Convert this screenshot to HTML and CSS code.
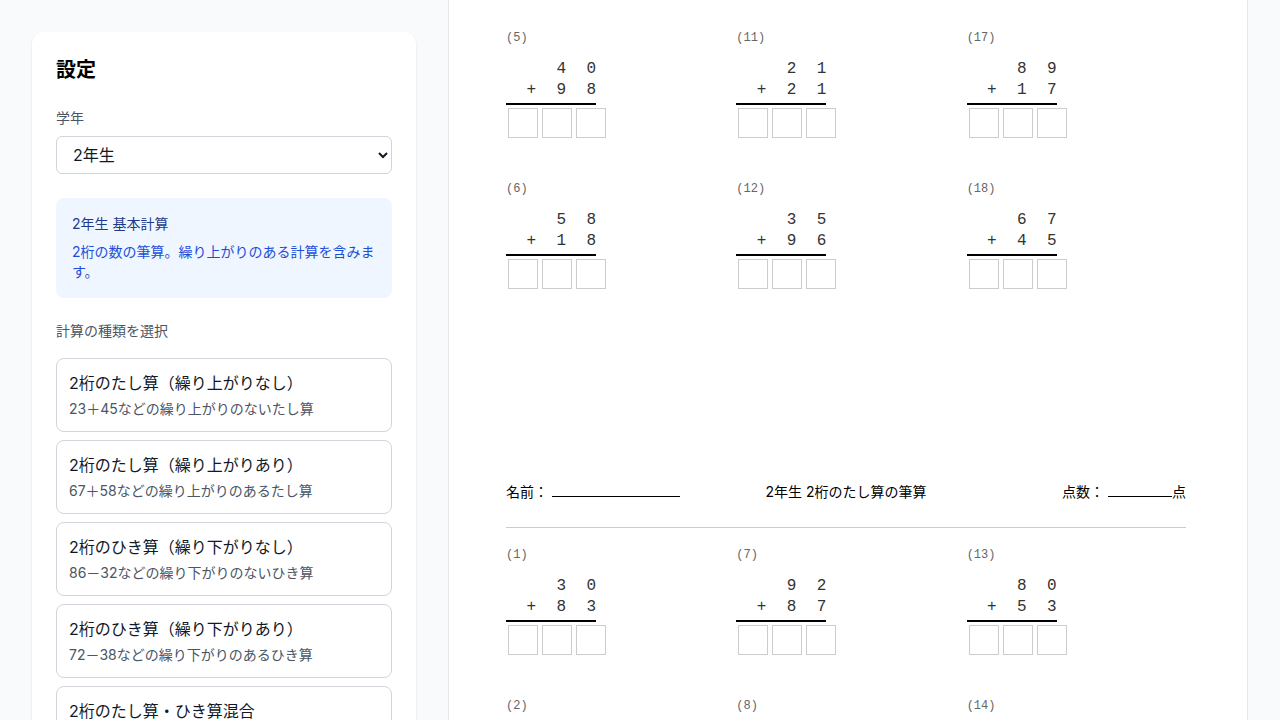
FILE: index.html
```html
<!DOCTYPE html>
<html lang="ja">
<head>
<meta charset="utf-8">
<title>筆算プリント</title>
<link rel="stylesheet" href="styles.css">
</head>
<body>
<div class="layout">
  <aside class="panel">
    <h2 class="panel-title">設定</h2>
    <label class="field-label">学年</label>
    <select class="grade-select">
      <option>1年生</option>
      <option selected>2年生</option>
      <option>3年生</option>
    </select>
    <div class="info">
      <div class="info-title">2年生 基本計算</div>
      <div class="info-desc">2桁の数の筆算。繰り上がりのある計算を含みます。</div>
    </div>
    <div class="field-label gap-16">計算の種類を選択</div>
    <div class="options">
      <div class="option">
        <div class="option-title">2桁のたし算（繰り上がりなし）</div>
        <div class="option-sub">23＋45などの繰り上がりのないたし算</div>
      </div>
      <div class="option">
        <div class="option-title">2桁のたし算（繰り上がりあり）</div>
        <div class="option-sub">67＋58などの繰り上がりのあるたし算</div>
      </div>
      <div class="option">
        <div class="option-title">2桁のひき算（繰り下がりなし）</div>
        <div class="option-sub">86－32などの繰り下がりのないひき算</div>
      </div>
      <div class="option">
        <div class="option-title">2桁のひき算（繰り下がりあり）</div>
        <div class="option-sub">72－38などの繰り下がりのあるひき算</div>
      </div>
      <div class="option">
        <div class="option-title">2桁のたし算・ひき算混合</div>
        <div class="option-sub">たし算とひき算が混ざった問題</div>
      </div>
    </div>
  </aside>

  <main class="sheet">
    <section class="grid">
      <div class="prob"><div class="num">(5)</div><div class="row"><span></span><span>4</span><span>0</span></div><div class="row last"><span>+</span><span>9</span><span>8</span></div><div class="boxes"><i></i><i></i><i></i></div></div>
      <div class="prob"><div class="num">(11)</div><div class="row"><span></span><span>2</span><span>1</span></div><div class="row last"><span>+</span><span>2</span><span>1</span></div><div class="boxes"><i></i><i></i><i></i></div></div>
      <div class="prob"><div class="num">(17)</div><div class="row"><span></span><span>8</span><span>9</span></div><div class="row last"><span>+</span><span>1</span><span>7</span></div><div class="boxes"><i></i><i></i><i></i></div></div>
      <div class="prob"><div class="num">(6)</div><div class="row"><span></span><span>5</span><span>8</span></div><div class="row last"><span>+</span><span>1</span><span>8</span></div><div class="boxes"><i></i><i></i><i></i></div></div>
      <div class="prob"><div class="num">(12)</div><div class="row"><span></span><span>3</span><span>5</span></div><div class="row last"><span>+</span><span>9</span><span>6</span></div><div class="boxes"><i></i><i></i><i></i></div></div>
      <div class="prob"><div class="num">(18)</div><div class="row"><span></span><span>6</span><span>7</span></div><div class="row last"><span>+</span><span>4</span><span>5</span></div><div class="boxes"><i></i><i></i><i></i></div></div>
    </section>

    <header class="sheet-head">
      <div class="head-left">名前：<span class="blank name"></span></div>
      <div class="head-center">2年生 2桁のたし算の筆算</div>
      <div class="head-right">点数：<span class="blank score"></span>点</div>
    </header>
    <div class="divider"></div>

    <section class="grid">
      <div class="prob"><div class="num">(1)</div><div class="row"><span></span><span>3</span><span>0</span></div><div class="row last"><span>+</span><span>8</span><span>3</span></div><div class="boxes"><i></i><i></i><i></i></div></div>
      <div class="prob"><div class="num">(7)</div><div class="row"><span></span><span>9</span><span>2</span></div><div class="row last"><span>+</span><span>8</span><span>7</span></div><div class="boxes"><i></i><i></i><i></i></div></div>
      <div class="prob"><div class="num">(13)</div><div class="row"><span></span><span>8</span><span>0</span></div><div class="row last"><span>+</span><span>5</span><span>3</span></div><div class="boxes"><i></i><i></i><i></i></div></div>
      <div class="prob"><div class="num">(2)</div><div class="row"><span></span><span>4</span><span>6</span></div><div class="row last"><span>+</span><span>7</span><span>9</span></div><div class="boxes"><i></i><i></i><i></i></div></div>
      <div class="prob"><div class="num">(8)</div><div class="row"><span></span><span>5</span><span>4</span></div><div class="row last"><span>+</span><span>6</span><span>8</span></div><div class="boxes"><i></i><i></i><i></i></div></div>
      <div class="prob"><div class="num">(14)</div><div class="row"><span></span><span>7</span><span>3</span></div><div class="row last"><span>+</span><span>2</span><span>9</span></div><div class="boxes"><i></i><i></i><i></i></div></div>
    </section>
  </main>
</div>
</body>
</html>
```

FILE: styles.css
```css
* { box-sizing: border-box; }
html, body { margin: 0; padding: 0; }
body {
  background: #f9fafb;
  font-family: Inter, "Noto Sans CJK JP", sans-serif;
  color: #111827;
  height: 720px;
  overflow: hidden;
}
.layout {
  display: flex;
  gap: 32px;
  padding: 0 32px;
  align-items: flex-start;
}
.panel {
  width: 384px;
  flex: none;
  margin-top: 32px;
  background: #fff;
  border-radius: 12px;
  box-shadow: 0 1px 3px rgba(0,0,0,0.08), 0 1px 2px rgba(0,0,0,0.04);
  padding: 24px;
}
.panel-title {
  margin: 0 0 24px;
  font-size: 20px;
  line-height: 28px;
  font-weight: 700;
  color: #000;
}
.field-label {
  display: block;
  font-size: 14px;
  line-height: 20px;
  color: #4b5563;
  margin-bottom: 8px;
}
.field-label.gap-16 { margin-bottom: 17px; }
.grade-select {
  display: block;
  width: 100%;
  height: 38px;
  padding: 0 12px;
  font-family: Inter, "Noto Sans CJK JP", sans-serif;
  font-size: 16px;
  color: #111827;
  background: #fff;
  border: 1px solid #d1d5db;
  border-radius: 6px;
  margin-bottom: 24px;
}
.info {
  background: #eff6ff;
  border-radius: 8px;
  padding: 16px 16px 17px;
  margin-bottom: 23px;
}
.info-title {
  font-size: 14px;
  line-height: 20px;
  font-weight: 400;
  color: #1e3a8a;
  margin-bottom: 8px;
}
.info-desc {
  font-size: 14px;
  line-height: 19.5px;
  color: #1d4ed8;
}
.options {
  display: flex;
  flex-direction: column;
  gap: 8px;
}
.option {
  border: 1px solid #d1d5db;
  border-radius: 8px;
  padding: 12px;
  background: #fff;
}
.option-title {
  font-size: 16px;
  line-height: 24px;
  font-weight: 400;
  color: #111827;
}
.option-sub {
  margin-top: 4px;
  font-size: 14px;
  line-height: 20px;
  color: #4b5563;
}

.sheet {
  flex: 1;
  height: 720px;
  background: #fff;
  border-left: 1px solid #e5e7eb;
  border-right: 1px solid #e5e7eb;
  padding: 29px 61px 0 57px;
  overflow: hidden;
}
.grid {
  display: grid;
  grid-template-columns: repeat(3, 1fr);
  column-gap: 11px;
  row-gap: 42px;
}
.prob { font-family: "Liberation Mono", monospace; }
.num {
  font-size: 12px;
  line-height: 16px;
  padding-top: 1px;
  color: #666;
  margin-bottom: 13px;
}
.row {
  display: flex;
  width: 90px;
  font-size: 16px;
  line-height: 21px;
  color: #333;
}
.row span {
  width: 30px;
  text-align: right;
}
.row.last {
  border-bottom: 2px solid #000;
  padding-bottom: 2px;
}
.boxes {
  display: flex;
  gap: 4px;
  padding-left: 2px;
  margin-top: 3px;
}
.boxes i {
  display: block;
  width: 30px;
  height: 30px;
  border: 1px solid #ccc;
}
.sheet-head {
  margin-top: 193px;
  display: grid;
  grid-template-columns: 1fr auto 1fr;
  align-items: center;
  font-size: 14px;
  line-height: 20px;
  color: #000;
}
.head-left { display: flex; align-items: baseline; }
.head-right { justify-self: end; display: flex; align-items: baseline; }
.blank {
  display: inline-block;
  border-bottom: 1px solid #000;
  height: 14px;
}
.blank.name { width: 128px; margin-left: 4px; }
.blank.score { width: 64px; margin-left: 4px; }
.divider {
  margin-top: 25px;
  height: 1px;
  background: #ccc;
  margin-bottom: 17.5px;
}
```
